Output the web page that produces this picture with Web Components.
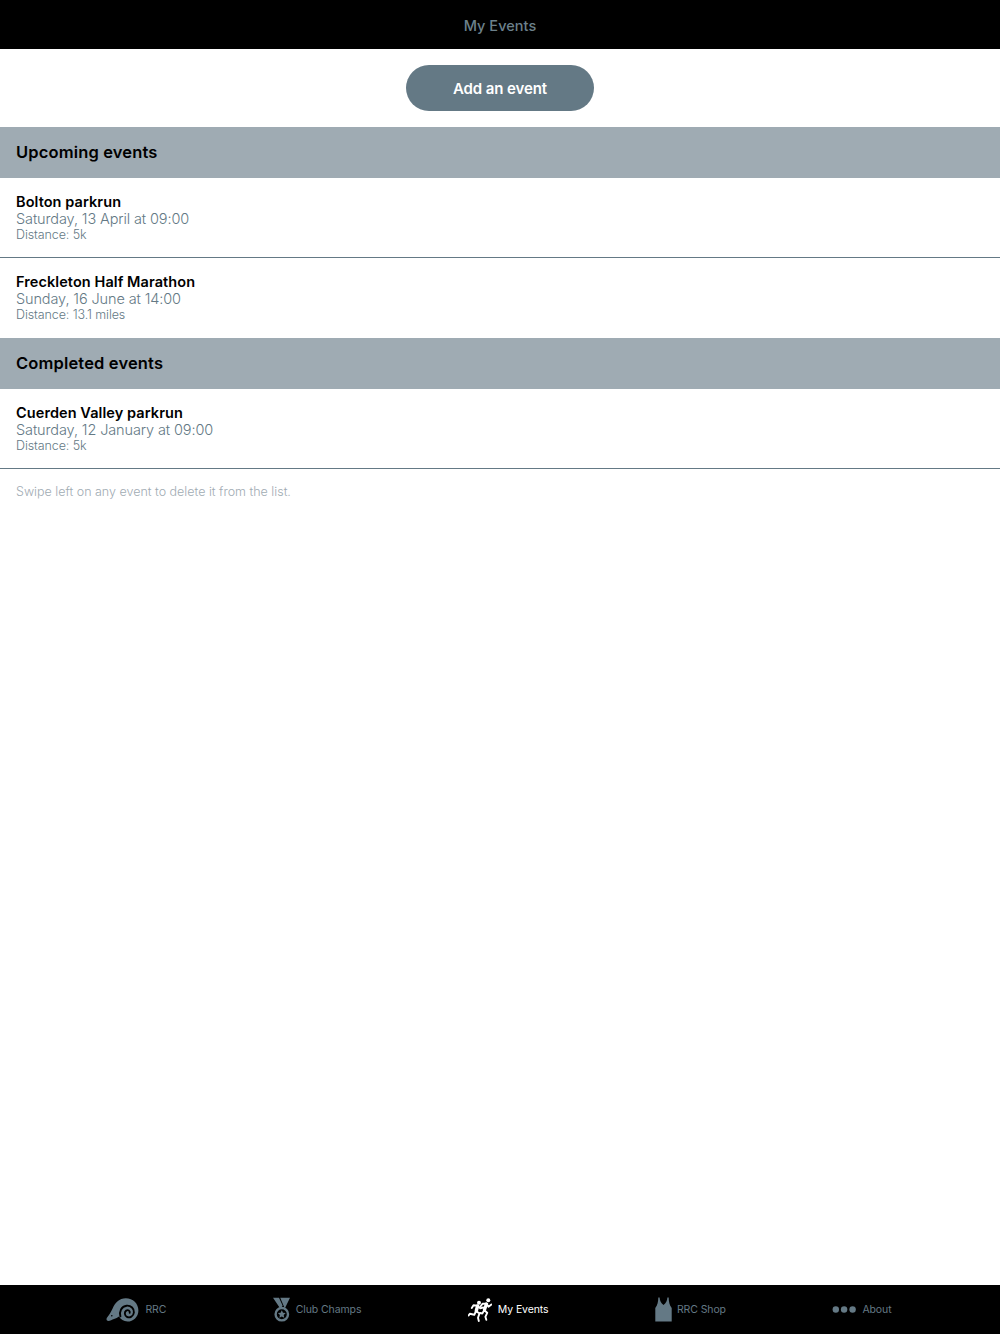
<!DOCTYPE html>
<html lang="en"><head><meta charset="utf-8"><title>My Events</title>
<style>
html,body{margin:0;height:100%;background:#fff}
body{font-family:Inter,"Open Sans","Liberation Sans",sans-serif;display:flex;flex-direction:column;height:1334px;overflow:hidden}
</style></head><body>
<app-header>My Events</app-header>
<add-button>Add an event</add-button>
<section-header>Upcoming events</section-header>
<event-row name="Bolton parkrun" when="Saturday, 13 April at 09:00" dist="Distance: 5k" line></event-row>
<event-row name="Freckleton Half Marathon" when="Sunday, 16 June at 14:00" dist="Distance: 13.1 miles"></event-row>
<section-header>Completed events</section-header>
<event-row name="Cuerden Valley parkrun" when="Saturday, 12 January at 09:00" dist="Distance: 5k" line></event-row>
<hint-text>Swipe left on any event to delete it from the list.</hint-text>
<tab-bar>
<tab-item label="RRC"><svg slot="icon" width="33" height="25" viewBox="0 0 33 25"><path fill="#647985" d="M1 23.6C.2 22.6.4 21.4 1.3 20.3 3 18.2 5 15.3 6.6 11.6 8.9 5.9 13.400 1.200 19.800 1.200 27 1.200 32.400 6.600 32.400 13.400 32.400 19.800 27.300 24.600 21.500 24.600 17.600 24.600 14.700 22.400 13 19.600 11.600 20.700 9.800 21.400 8 22 5.600 22.900 3 24.600 1 23.600Z"/><path fill="none" stroke="#000" stroke-width="1.900" stroke-linecap="round" d="M14.400 19.400C13 14.700 15.400 9.200 20.600 8.700 25 8.300 28.300 11.600 27.900 15.500 27.500 19.300 23.800 21.300 20.900 19.800 18.500 18.500 18.100 15 20.200 13.600 22 12.400 24.200 13.800 23.700 15.800"/><circle cx="5.800" cy="18.700" r=".8" fill="#000"/></svg></tab-item>
<tab-item label="Club Champs"><svg slot="icon" width="17" height="25" viewBox="0 0 17 25"><path fill="#647985" d="M0 .8H6L9.600 8.400 7.700 12.200ZM7.200.8H17L11.800 11.500Z"/><path fill="#647985" fill-rule="evenodd" d="M8.800 9.800a7.400 7.400 0 1 1 0 14.800 7.400 7.400 0 0 1 0-14.800Zm0 2.400a5 5 0 1 0 0 10 5 5 0 0 0 0-10Z"/><path fill="#647985" d="M8.800 13.200l1.200 2.500 2.700.4-2 1.900.5 2.700-2.400-1.300-2.400 1.300.5-2.700-2-1.900 2.700-.4Z"/></svg></tab-item>
<tab-item label="My Events" active><svg slot="icon" width="24" height="24" viewBox="0 0 24 24"><g fill="#fff"><circle cx="11" cy="4.800" r="2"/><circle cx="20.300" cy="2.200" r="2"/></g><g fill="none" stroke="#fff" stroke-linecap="round" stroke-linejoin="round"><path stroke-width="3.400" d="M9.600 8 8.300 12.800"/><path stroke-width="1.900" d="M9.600 7.600 5.500 7.300 3.800 10M10 8l2.300 2.300 2.800-.8M8 13.200 11.500 15.400 10 19.800 10.800 23M7.800 13.500 6.300 16.800 1.800 15.800.6 17.500"/><path stroke-width="3.400" d="M18.500 6 16.500 11.500"/><path stroke-width="1.900" d="M18.600 5.800 14.500 5.800 12.700 8.300M18.800 6.200 20.500 8.800 23.400 6.600M16 12 19.200 14.800 17.400 18.800 18.300 21.800M16.200 12.300 14.300 15.500 12.200 15"/></g></svg></tab-item>
<tab-item label="RRC Shop" tight><svg slot="icon" width="17" height="25" viewBox="0 0 17 25"><path fill="#647985" d="M3.300.5H4.600C4.800 3.500 6 6.500 8.500 8 11 6.500 12.200 3.500 12.400.5H13.700C13.800 4.500 14.400 8.500 16.700 11V24.500H.3V11C2.600 8.500 3.200 4.500 3.300.5Z"/></svg></tab-item>
<tab-item label="About" tight><svg slot="icon" width="25" height="25" viewBox="0 0 25 25"><g fill="#647985"><circle cx="3.800" cy="12.500" r="3.200"/><circle cx="12.100" cy="12.500" r="3.200"/><circle cx="20.600" cy="12.500" r="3.200"/></g></svg></tab-item>
</tab-bar>
<script>
function def(name,html){customElements.define(name,class extends HTMLElement{constructor(){super();this.attachShadow({mode:'open'}).innerHTML=html}})}
def('app-header',`<style>:host{display:flex;flex:none;height:49px;box-sizing:border-box;padding-top:2px;align-items:center;justify-content:center;background:#000;color:#6c808b;font-size:14.5px;font-weight:500;letter-spacing:.05px}</style><slot></slot>`);
def('add-button',`<style>:host{display:flex;flex:none;height:78px;align-items:center;justify-content:center}
span{display:flex;width:188px;height:46px;border-radius:23px;align-items:center;justify-content:center;background:#647985;color:#fff;font-size:15px;font-weight:600;letter-spacing:-.1px}</style><span><slot></slot></span>`);
def('section-header',`<style>:host{display:flex;flex:none;height:51px;box-sizing:border-box;padding:0 16px 2px;align-items:center;background:#9fabb3;color:#000;font-size:16.5px;font-weight:600;letter-spacing:.15px}</style><slot></slot>`);
customElements.define('event-row',class extends HTMLElement{constructor(){super();this.attachShadow({mode:'open'})}
connectedCallback(){const g=a=>this.getAttribute(a);this.shadowRoot.innerHTML=`<style>:host{display:flex;flex:none;flex-direction:column;height:80px;box-sizing:border-box;padding:15px 16px 0}
:host([line]){border-bottom:1px solid #647985}
.n{font-size:14.5px;font-weight:600;color:#000;line-height:17px;letter-spacing:.08px}
.w{font-size:14.5px;font-weight:300;color:#647985;line-height:17px;letter-spacing:-.12px}
.d{font-size:12.500px;font-weight:300;color:#647985;line-height:15px;letter-spacing:-.1px}</style>
<div class="n">${g('name')}</div><div class="w">${g('when')}</div><div class="d">${g('dist')}</div>`}});
def('hint-text',`<style>:host{display:block;flex:none;padding:15px 16px 0;color:#9fabb3;font-size:12.500px;font-weight:300;line-height:16px;letter-spacing:0}</style><slot></slot>`);
def('tab-bar',`<style>:host{display:flex;flex:none;margin-top:auto;height:49px;box-sizing:border-box;padding-right:2px;align-items:center;justify-content:space-evenly;background:#000}</style><slot></slot>`);
customElements.define('tab-item',class extends HTMLElement{constructor(){super();this.attachShadow({mode:'open'})}
connectedCallback(){this.shadowRoot.innerHTML=`<style>:host{display:flex;align-items:center;gap:6px;color:#647985;font-size:10.500px;font-weight:400;letter-spacing:-.1px}
:host([active]){color:#fff}:host([tight]){gap:5px}</style><slot name="icon"></slot><span>${this.getAttribute('label')}</span>`}});
</script>
</body></html>
